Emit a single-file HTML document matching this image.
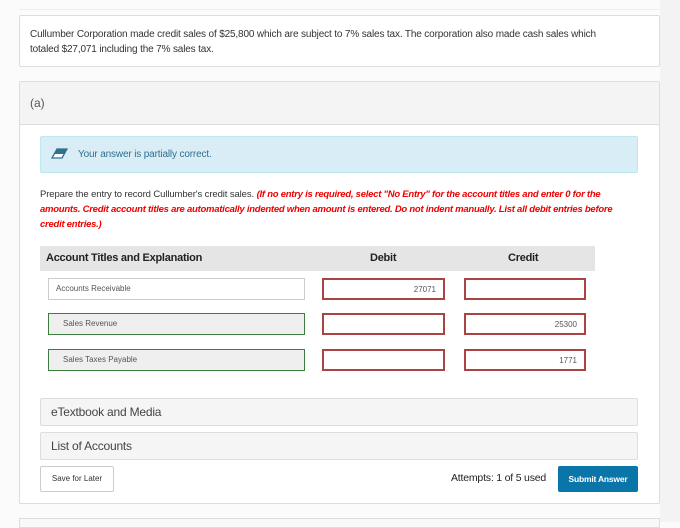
<!DOCTYPE html>
<html><head><meta charset="utf-8"><style>
*{box-sizing:border-box;margin:0;padding:0}
body{width:680px;height:522px;background:#fbfbfb;font-family:"Liberation Sans",sans-serif;color:#333;position:relative;overflow:hidden}
.abs{position:absolute}
.strip{left:660px;top:0;width:20px;height:522px;background:#f3f3f3}
.card{background:#fff;border:1px solid #ddd;border-radius:2px}
.inp{position:absolute;height:22px;background:#fff;font-size:8px;color:#555;line-height:20px;padding:0 7px}
.red{border:2px solid #a94442;text-align:right}
.grn{border:1px solid #3c7d3c;background:#efefef;padding-left:14px}
.acc{position:absolute;left:40px;width:598px;height:28px;background:#f5f5f5;border:1px solid #ddd;border-radius:2px;font-size:12px;padding-left:10px;line-height:26px;color:#444;letter-spacing:-0.2px}
</style></head><body>
<div class="abs strip"></div>
<div class="abs" style="left:19px;top:9px;width:641px;height:1px;background:#eee"></div>
<div class="abs card" style="left:19px;top:15px;width:641px;height:52px;padding:11px 10px;font-size:10px;line-height:15px;letter-spacing:-0.15px;white-space:nowrap">Cullumber Corporation made credit sales of $25,800 which are subject to 7% sales tax. The corporation also made cash sales which<br>totaled $27,071 including the 7% sales tax.</div>
<div class="abs card" style="left:19px;top:81px;width:641px;height:423px"></div>
<div class="abs" style="left:20px;top:82px;width:639px;height:43px;background:#f4f4f4;border-bottom:1px solid #ddd;font-size:12px;color:#555;padding:14px 0 0 10px">(a)</div>
<div class="abs" style="left:40px;top:136px;width:598px;height:37px;background:#d9edf7;border:1px solid #bce8f1;border-radius:2px;font-size:10px;color:#31708f;line-height:35px;padding-left:37px;letter-spacing:-0.15px">Your answer is partially correct.
<svg class="abs" style="left:10px;top:11px" width="18" height="12" viewBox="0 0 18 12"><path d="M6 1H16L11 10H1Z" fill="#fff" stroke="#31708f" stroke-width="1.3"/><path d="M6 1H16L13 6H3Z" fill="#31708f"/></svg></div>
<div class="abs" style="left:40px;top:187px;width:640px;font-size:9.5px;line-height:15px;letter-spacing:-0.1px;white-space:nowrap">Prepare the entry to record Cullumber's credit sales. <i style="color:#e00;font-weight:bold;letter-spacing:-0.25px">(If no entry is required, select "No Entry" for the account titles and enter 0 for the<br>amounts. Credit account titles are automatically indented when amount is entered. Do not indent manually. List all debit entries before<br>credit entries.)</i></div>
<div class="abs" style="left:40px;top:246px;width:555px;height:25px;background:#e5e5e5;font-weight:bold;font-size:11px;color:#222;line-height:25px;letter-spacing:-0.25px">
<span class="abs" style="left:6px">Account Titles and Explanation</span><span class="abs" style="left:330px">Debit</span><span class="abs" style="left:468px">Credit</span></div>
<div class="inp" style="left:48px;top:278px;width:257px;border:1px solid #ccc">Accounts Receivable</div>
<div class="inp red" style="left:322px;top:278px;width:123px">27071</div>
<div class="inp red" style="left:464px;top:278px;width:122px"></div>
<div class="inp grn" style="left:48px;top:313px;width:257px">Sales Revenue</div>
<div class="inp red" style="left:322px;top:313px;width:123px"></div>
<div class="inp red" style="left:464px;top:313px;width:122px">25300</div>
<div class="inp grn" style="left:48px;top:349px;width:257px">Sales Taxes Payable</div>
<div class="inp red" style="left:322px;top:349px;width:123px"></div>
<div class="inp red" style="left:464px;top:349px;width:122px">1771</div>
<div class="acc" style="top:398px">eTextbook and Media</div>
<div class="acc" style="top:432px">List of Accounts</div>
<div class="abs" style="left:40px;top:466px;width:74px;height:26px;border:1px solid #ccc;border-radius:2px;background:#fff;font-size:8px;line-height:24px;text-align:center">Save for Later</div>
<div class="abs" style="left:451px;top:472px;font-size:10.5px;color:#222;letter-spacing:-0.2px">Attempts: 1 of 5 used</div>
<div class="abs" style="left:558px;top:466px;width:80px;height:26px;background:#0a75a8;border-radius:2px;color:#fff;font-size:8.5px;font-weight:bold;line-height:26px;text-align:center;letter-spacing:-0.2px">Submit Answer</div>
<div class="abs" style="left:19px;top:518px;width:641px;height:10px;background:#f8f8f8;border:1px solid #ddd"></div>
</body></html>
